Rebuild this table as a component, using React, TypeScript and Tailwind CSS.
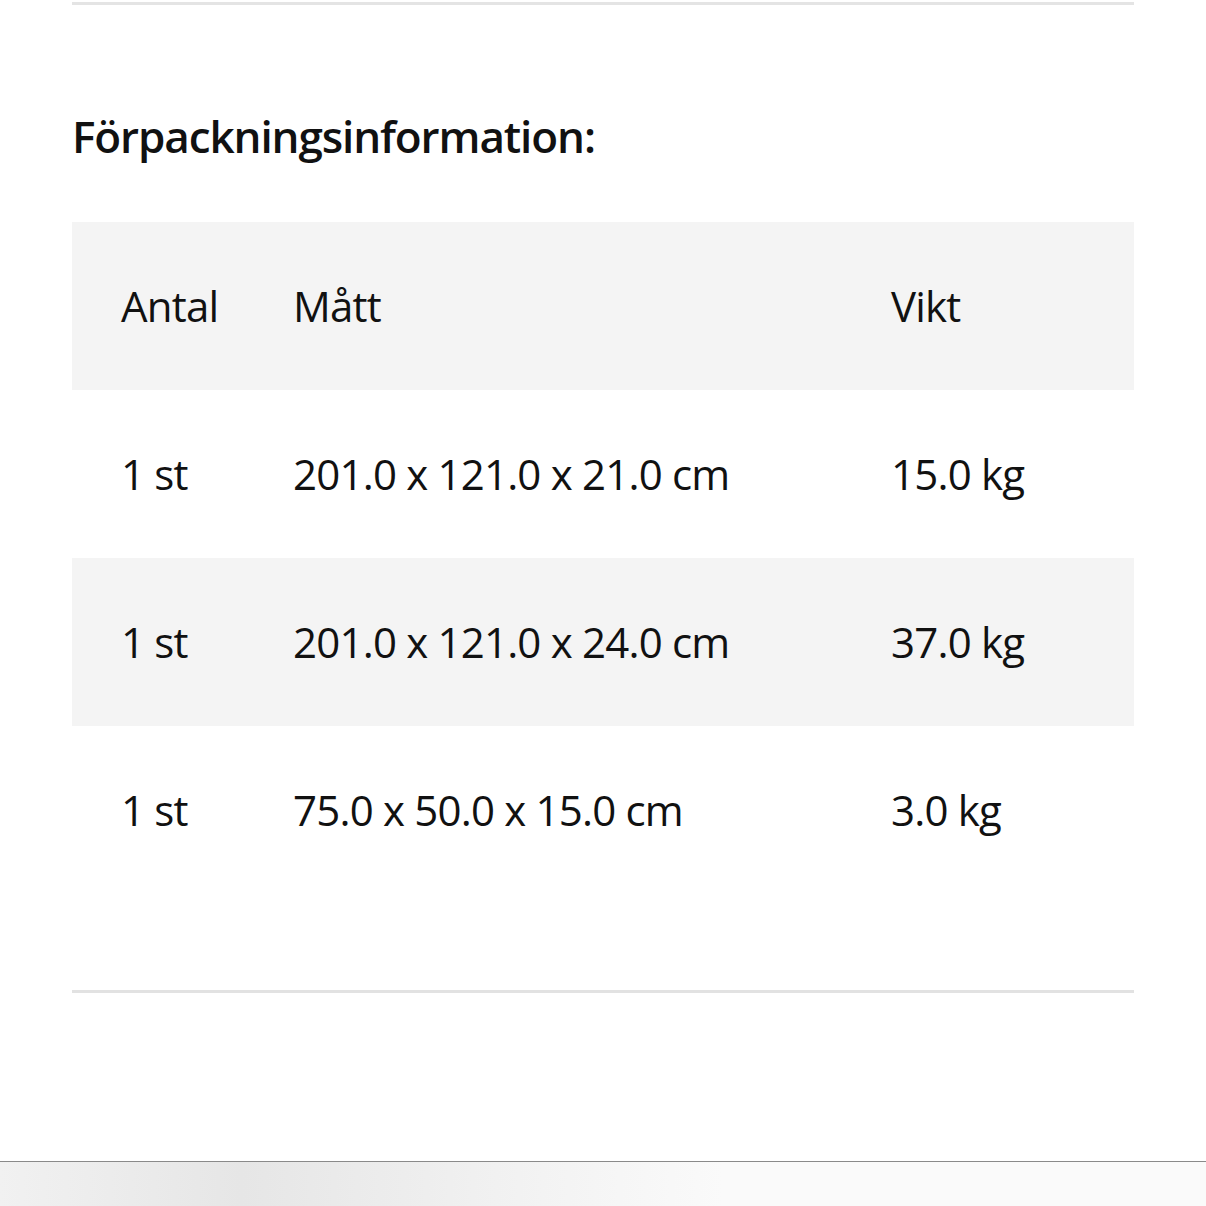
const rows = [
  {qty: "1 st", size: "201.0 x 121.0 x 21.0 cm", weight: "15.0 kg"},
  {qty: "1 st", size: "201.0 x 121.0 x 24.0 cm", weight: "37.0 kg"},
  {qty: "1 st", size: "75.0 x 50.0 x 15.0 cm", weight: "3.0 kg"},
];

const font = {fontFamily: '"Open Sans", "Noto Sans", sans-serif'};

const Row = ({cells, shaded}: {cells: string[]; shaded: boolean}) => (
  <div
    className={`grid grid-cols-[172px_598px_1fr] items-center h-[168px] pl-[49px] text-[42px] tracking-[-0.8px] text-[#111] ${
      shaded ? "bg-[#f4f4f4]" : ""
    }`}
  >
    {cells.map((c, i) => (
      <div key={i} className="leading-none">
        {c}
      </div>
    ))}
  </div>
);

export default function App() {
  return (
    <div className="w-[1206px] h-[1206px] bg-white flex flex-col overflow-hidden" style={font}>
      <div className="px-[72px] flex flex-col">
        <div className="mt-[2px] h-[3px] bg-[#e4e4e4]" />
        <h2 className="mt-[109px] text-[44px] font-semibold leading-none tracking-[-1.1px] text-[#111]">
          Förpackningsinformation:
        </h2>
        <div className="mt-[64px] flex flex-col">
          <Row cells={["Antal", "Mått", "Vikt"]} shaded />
          {rows.map((r, i) => (
            <Row key={i} cells={[r.qty, r.size, r.weight]} shaded={i % 2 === 1} />
          ))}
        </div>
        <div className="mt-[96px] h-[3px] bg-[#e2e2e2]" />
      </div>
      <div className="mt-auto h-[1px] bg-[#8a8a8a]" />
      <div className="h-[44px] bg-[linear-gradient(90deg,#f1f1f1_0%,#e6e6e6_20%,#f3f3f3_45%,#fafafa_60%,#fafafa_100%)]" />
    </div>
  );
}
